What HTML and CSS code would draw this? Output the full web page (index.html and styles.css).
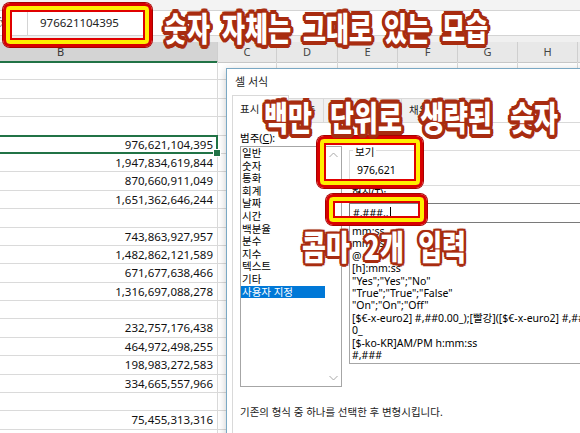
FILE: index.html
```html
<!DOCTYPE html>
<html lang="ko">
<head>
<meta charset="utf-8">
<title>셀 서식</title>
<link rel="stylesheet" href="styles.css">
</head>
<body>
<div class="ribbon"></div>
<div class="formula">
  <div class="fx"><span>fx</span></div>
  <div class="finput">976621104395</div>
</div>
<div class="gap"></div>
<div class="sheet">
  <div class="cols colhead">
    <div class="ch sel">B</div><div class="ch">C</div><div class="ch">D</div><div class="ch">E</div><div class="ch">F</div><div class="ch">G</div><div class="ch">H</div><div class="ch">I</div>
  </div>
  <div class="row cols"><div class="cell"></div><i></i><i></i><i></i><i></i><i></i><i></i><i></i></div>
  <div class="row cols"><div class="cell"></div><i></i><i></i><i></i><i></i><i></i><i></i><i></i></div>
  <div class="row cols"><div class="cell"></div><i></i><i></i><i></i><i></i><i></i><i></i><i></i></div>
  <div class="row cols"><div class="cell"></div><i></i><i></i><i></i><i></i><i></i><i></i><i></i></div>
  <div class="row cols"><div class="cell active">976,621,104,395</div><i></i><i></i><i></i><i></i><i></i><i></i><i></i></div>
  <div class="row cols"><div class="cell">1,947,834,619,844</div><i></i><i></i><i></i><i></i><i></i><i></i><i></i></div>
  <div class="row cols"><div class="cell">870,660,911,049</div><i></i><i></i><i></i><i></i><i></i><i></i><i></i></div>
  <div class="row cols"><div class="cell">1,651,362,646,244</div><i></i><i></i><i></i><i></i><i></i><i></i><i></i></div>
  <div class="row cols"><div class="cell"></div><i></i><i></i><i></i><i></i><i></i><i></i><i></i></div>
  <div class="row cols"><div class="cell">743,863,927,957</div><i></i><i></i><i></i><i></i><i></i><i></i><i></i></div>
  <div class="row cols"><div class="cell">1,482,862,121,589</div><i></i><i></i><i></i><i></i><i></i><i></i><i></i></div>
  <div class="row cols"><div class="cell">671,677,638,466</div><i></i><i></i><i></i><i></i><i></i><i></i><i></i></div>
  <div class="row cols"><div class="cell">1,316,697,088,278</div><i></i><i></i><i></i><i></i><i></i><i></i><i></i></div>
  <div class="row cols"><div class="cell"></div><i></i><i></i><i></i><i></i><i></i><i></i><i></i></div>
  <div class="row cols"><div class="cell">232,757,176,438</div><i></i><i></i><i></i><i></i><i></i><i></i><i></i></div>
  <div class="row cols"><div class="cell">464,972,498,255</div><i></i><i></i><i></i><i></i><i></i><i></i><i></i></div>
  <div class="row cols"><div class="cell">198,983,272,583</div><i></i><i></i><i></i><i></i><i></i><i></i><i></i></div>
  <div class="row cols"><div class="cell">334,665,557,966</div><i></i><i></i><i></i><i></i><i></i><i></i><i></i></div>
  <div class="row cols"><div class="cell"></div><i></i><i></i><i></i><i></i><i></i><i></i><i></i></div>
  <div class="row cols"><div class="cell">75,455,313,316</div><i></i><i></i><i></i><i></i><i></i><i></i><i></i></div>
  <div class="row cols"><div class="cell"></div><i></i><i></i><i></i><i></i><i></i><i></i><i></i></div>
</div>

<div class="dialog">
  <div class="dlg-title">셀 서식</div>
  <div class="tabs">
    <div class="tab on">표시 형식</div>
    <div class="tab">맞춤</div>
    <div class="tab">글꼴</div>
    <div class="tab">테두리</div>
    <div class="tab">채우기</div>
    <div class="tab">보호</div>
  </div>
  <div class="page">
    <div class="pbody">
      <div class="left">
        <div class="lbl">범주(<span class="u">C</span>):</div>
        <div class="catlist">
          <div class="items">
            <div class="item">일반</div>
            <div class="item">숫자</div>
            <div class="item">통화</div>
            <div class="item">회계</div>
            <div class="item">날짜</div>
            <div class="item">시간</div>
            <div class="item">백분율</div>
            <div class="item">분수</div>
            <div class="item">지수</div>
            <div class="item">텍스트</div>
            <div class="item">기타</div>
            <div class="item sel">사용자 지정</div>
          </div>
          <div class="vscroll">
            <div class="arrow"><svg width="9" height="6" viewBox="0 0 9 6"><polyline points="0.5,5 4.5,1 8.5,5" fill="none" stroke="#a8a8a8" stroke-width="1"/></svg></div>
            <div class="arrow"><svg width="9" height="6" viewBox="0 0 9 6"><polyline points="0.5,1 4.5,5 8.5,1" fill="none" stroke="#a8a8a8" stroke-width="1"/></svg></div>
          </div>
        </div>
      </div>
      <div class="right">
        <div class="sample">
          <div class="legend">보기</div>
          <div class="sval">976,621</div>
        </div>
        <div class="fmtlabel">형식(<span class="u">T</span>):</div>
        <div class="fmtinput"><span>#,###,,</span><span class="caret"></span></div>
        <div class="typelist">
          <div class="tl">mm:ss</div>
          <div class="tl">mm:ss.0</div>
          <div class="tl">@</div>
          <div class="tl">[h]:mm:ss</div>
          <div class="tl">"Yes";"Yes";"No"</div>
          <div class="tl">"True";"True";"False"</div>
          <div class="tl">"On";"On";"Off"</div>
          <div class="tl">[$€-x-euro2] #,##0.00_);[빨강]([$€-x-euro2] #,##0.00)</div>
          <div class="tl">0_</div>
          <div class="tl">[$-ko-KR]AM/PM h:mm:ss</div>
          <div class="tl">#,###</div>
        </div>
      </div>
    </div>
    <div class="desc">기존의 형식 중 하나를 선택한 후 변형시킵니다.</div>
  </div>
</div>

<div class="mark m1"></div>
<div class="mark m2"></div>
<div class="mark m3"></div>

<div class="note n1">숫자 자체는 그대로 있는 모습</div>
<div class="note n2">백만 단위로 생략된 숫자</div>
<div class="note n3">콤마 2개 입력</div>
</body>
</html>
```
FILE: styles.css
```css
* { box-sizing: border-box; }
html, body { margin: 0; padding: 0; }
body {
  width: 580px;
  height: 433px;
  overflow: hidden;
  position: relative;
  background: #fff;
  font-family: "Noto Sans", "Noto Sans CJK KR", sans-serif;
  color: #000;
}

/* ---------- sheet ---------- */
.ribbon { height: 10px; background: #f3f3f3; }
.formula {
  height: 26px;
  display: flex;
  border-top: 1px solid #d4d4d4;
  border-bottom: 1px solid #d4d4d4;
  background: #fff;
}
.fx {
  width: 27px;
  overflow: hidden;
  font-family: "DejaVu Serif", serif;
  font-style: italic;
  font-size: 12px;
  line-height: 24px;
  color: #666;
  white-space: nowrap;
}
.fx span { margin-left: -5px; }
.finput {
  flex: 1;
  border-left: 1px solid #d4d4d4;
  padding-left: 12px;
  font-size: 11.5px;
  line-height: 24px;
  color: #222;
}
.gap { height: 6px; background: #f0f0f0; }

.sheet { margin-left: -96px; }
.cols {
  display: grid;
  grid-template-columns: 314px 59px 61px 60px 60px 60px 60px 60px;
}
.colhead { height: 20px; background: #e8e8e8; }
.ch {
  border-right: 1px solid #cfcfcf;
  border-bottom: 1px solid #c8c8c8;
  text-align: center;
  font-size: 11px;
  line-height: 19px;
  color: #444;
}
.ch.sel {
  background: #d4d4d4;
  border-bottom: 2px solid #217346;
  color: #333;
}
.row { height: 18.4px; }
.cell, .row > i {
  display: block;
  border-right: 1px solid #dadada;
  border-bottom: 1px solid #dadada;
}
.cell {
  text-align: right;
  padding-right: 4px;
  font-size: 11.5px;
  line-height: 17px;
  white-space: nowrap;
  color: #111;
}
.cell.active { position: relative; }
.cell.active::after {
  content: "";
  position: absolute;
  left: -2px;
  top: -1px;
  right: -1px;
  bottom: -1px;
  border: 2px solid #217346;
}
.cell.active::before {
  content: "";
  position: absolute;
  right: -4px;
  bottom: -4px;
  width: 6px;
  height: 6px;
  background: #217346;
  border: 1px solid #fff;
  z-index: 1;
}

/* ---------- dialog ---------- */
.dialog {
  position: absolute;
  left: 226px;
  top: 68px;
  width: 380px;
  height: 380px;
  background: #fff;
  border: 1px solid #7aa8c4;
  box-shadow: 0 2px 8px rgba(0, 0, 0, .22);
  font-size: 10.5px;
  color: #000;
}
.dlg-title {
  height: 24px;
  padding-left: 8px;
  line-height: 26px;
  font-size: 11px;
  color: #222;
}
.tabs {
  display: flex;
  align-items: flex-end;
  height: 29px;
  padding-left: 5px;
  position: relative;
  z-index: 1;
}
.tab {
  height: 24px;
  padding: 0 7px;
  background: #f0f0f0;
  border: 1px solid #d9d9d9;
  border-bottom: none;
  line-height: 22px;
  margin-left: -1px;
  white-space: nowrap;
  color: #222;
}
.tab.on {
  margin-left: 0;
  height: 28px;
  margin-bottom: -1px;
  background: #fff;
  line-height: 26px;
}
.page {
  margin-left: 5px;
  height: 330px;
  border: 1px solid #d9d9d9;
  padding: 8px 0 0 7px;
  background: #fff;
}
.pbody { display: flex; }
.left { width: 102px; flex: none; }
.lbl { height: 14px; line-height: 14px; }
.u { text-decoration: underline; }
.catlist {
  margin-top: 1px;
  height: 241px;
  border: 1px solid #a6a6a6;
  display: flex;
  background: #fff;
}
.items { flex: 1; }
.item {
  height: 12.6px;
  line-height: 12.6px;
  padding-left: 1px;
  white-space: nowrap;
}
.item.sel { background: #0078d7; color: #fff; }
.vscroll {
  width: 16px;
  display: flex;
  flex-direction: column;
  justify-content: space-between;
}
.arrow {
  height: 16px;
  display: flex;
  align-items: center;
  justify-content: center;
}
.arrow svg { display: block; }
.right { margin-left: 7px; width: 300px; flex: none; }
.sample {
  margin-top: 19px;
  height: 36px;
  border: 1px solid #dcdcdc;
}
.legend {
  width: fit-content;
  margin: -6px 0 0 3px;
  padding: 0 2px;
  background: #fff;
  line-height: 14px;
}
.sval { margin-top: 4px; padding-left: 7px; line-height: 14px; }
.fmtlabel { height: 14px; line-height: 14px; padding-left: 3px; }
.fmtinput {
  margin-top: 3px;
  height: 20px;
  border: 1px solid #7a7a7a;
  padding-left: 3px;
  display: flex;
  align-items: center;
  position: relative;
  z-index: 1;
  background: #fff;
}
.caret { width: 1px; height: 12px; background: #000; margin-left: 1px; }
.typelist {
  margin-top: -1px;
  height: 142px;
  border: 1px solid #a6a6a6;
  padding: 2px 0 0 2px;
  overflow: hidden;
}
.tl { height: 12.4px; line-height: 12.4px; white-space: nowrap; }
.desc { margin-top: 18px; line-height: 14px; color: #222; }

/* ---------- annotations ---------- */
.mark {
  position: absolute;
  z-index: 5;
  border: 3px solid #d80000;
  border-radius: 7px;
  box-shadow: inset 0 0 0 4px #ffef00, inset 0 0 0 6px #e00000, 0 0 0 1px #a80000;
}
.m1 { left: 3px; top: 3px; width: 149px; height: 44px; }
.m2 { left: 317px; top: 136px; width: 106px; height: 52px; }
.m3 { left: 326px; top: 194px; width: 101px; height: 31px; }

.note {
  position: absolute;
  z-index: 6;
  font-family: "Noto Sans CJK KR", sans-serif;
  font-weight: 900;
  color: #fff;
  white-space: nowrap;
  line-height: 1;
  transform: scaleY(1.3);
  transform-origin: 0 50%;
  text-shadow:
    3px 0 0 #a82c10, -3px 0 0 #a82c10, 0 3px 0 #a82c10, 0 -3px 0 #a82c10,
    2px 2px 0 #a82c10, -2px 2px 0 #a82c10, 2px -2px 0 #a82c10, -2px -2px 0 #a82c10,
    3px 1px 0 #a82c10, 3px -1px 0 #a82c10, -3px 1px 0 #a82c10, -3px -1px 0 #a82c10,
    1px 3px 0 #a82c10, -1px 3px 0 #a82c10, 1px -3px 0 #a82c10, -1px -3px 0 #a82c10,
    0 0 3px #8a2008;
}
.n1 { left: 164px; top: 14.5px; font-size: 25px; word-spacing: 5px; }
.n2 { left: 264px; top: 104px; font-size: 26px; word-spacing: 11px; }
.n3 {
  left: 302px;
  top: 233px;
  font-size: 26px;
  word-spacing: 7px;
  text-shadow:
    2.5px 0 0 #a82c10, -2.5px 0 0 #a82c10, 0 2px 0 #a82c10, 0 -2px 0 #a82c10,
    2px 1.5px 0 #a82c10, -2px 1.5px 0 #a82c10, 2px -1.5px 0 #a82c10, -2px -1.5px 0 #a82c10,
    0 0 3px #8a2008;
}
```
